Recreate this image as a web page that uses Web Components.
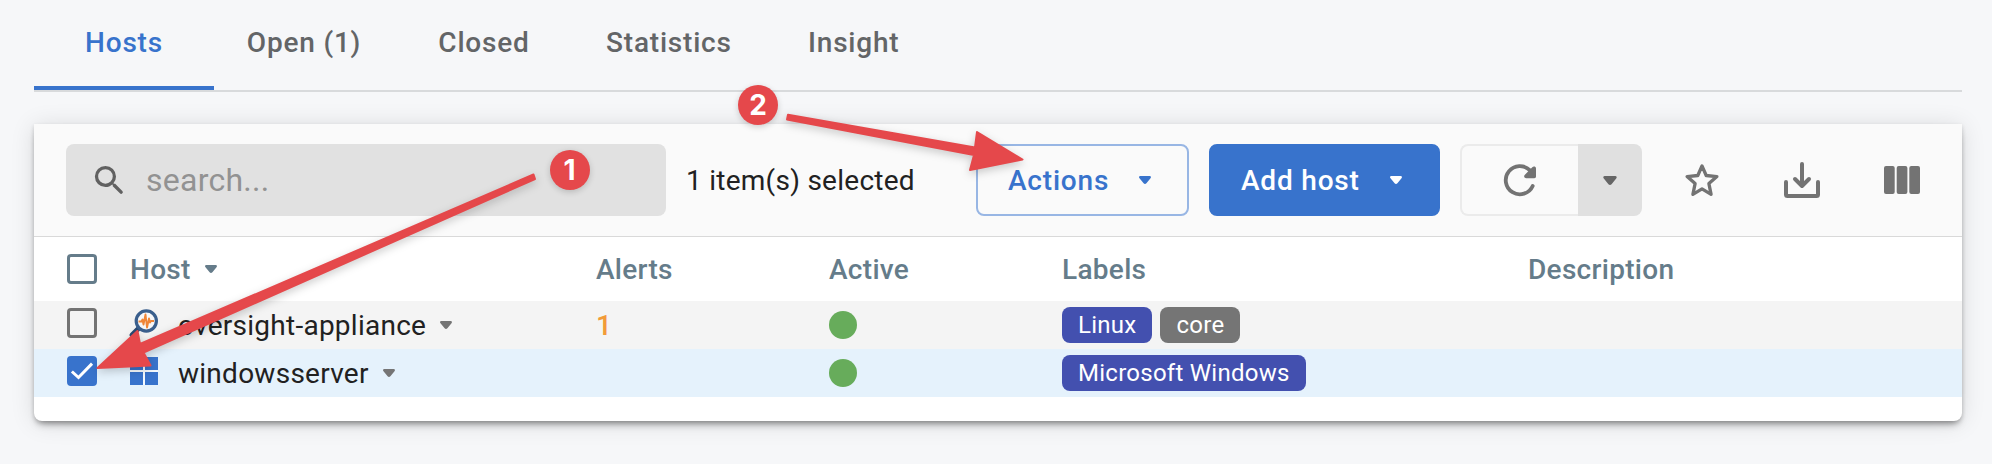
<!DOCTYPE html>
<html lang="en">
<head>
<meta charset="utf-8">
<title>Hosts</title>
<style>
body{margin:0;background:#f6f7f9;font-family:Roboto,"Liberation Sans",sans-serif}
</style>
</head>
<body>
<hosts-page></hosts-page>
<script>
const define=(name,html,init)=>{
  const t=document.createElement('template');
  t.innerHTML=html;
  customElements.define(name,class extends HTMLElement{
    constructor(){
      super();
      this.attachShadow({mode:'open'}).append(t.content.cloneNode(true));
    }
    connectedCallback(){ if(init) init(this,this.shadowRoot); }
  });
};

const icons={
  search:['24 24','<path d="M15.5 14h-.79l-.28-.27A6.47 6.47 0 0 0 16 9.5 6.5 6.5 0 1 0 9.5 16c1.61 0 3.09-.59 4.23-1.57l.27.28v.79l4.4 4.4a1.06 1.06 0 0 0 1.5-1.5zm-6 0a4.5 4.5 0 1 1 0-9 4.5 4.5 0 0 1 0 9z"/>'],
  refresh:['32 32','<path d="M28.700 22A14.100 14.100 0 1 1 26 6.400" fill="none" stroke="currentColor" stroke-width="3.800" stroke-linecap="round"/><path d="M28.3 3.2c1.2-1.1 3.7-.7 3.7 1.3v8c0 1-.7 1.7-1.7 1.7h-8c-2.2 0-2.8-2.2-1.4-3.5z"/>'],
  star:['34 34','<path d="M17 2.9l4.2 9.6 10.7 1.1-8 7 2.2 10.7L17 25.9l-9.1 5.4 2.2-10.7-8-7 10.7-1.1z" fill="none" stroke="currentColor" stroke-width="3.3" stroke-linejoin="round"/>'],
  download:['36 36','<g fill="none" stroke="currentColor" stroke-width="4" stroke-linecap="round" stroke-linejoin="round"><path d="M18 2v21M11 17l7 7 7-7M2 20v12.500Q2 34 3.500 34h29q1.500 0 1.500-1.500V20"/></g>'],
  columns:['36 28','<rect width="10.700" height="28" rx="2"/><rect x="12.700" width="10.700" height="28" rx="2"/><rect x="25.300" width="10.700" height="28" rx="2"/>'],
  caret:['12 8','<path d="M1.300 0h9.400c1.300 0 1.700 1.500.8 2.300L7.400 7.300c-.8.900-2 .9-2.800 0L.5 2.300C-.4 1.500 0 0 1.300 0z"/>'],
  check:['22 16','<path d="M2 9.500l5.500 5L20 1.700" fill="none" stroke="currentColor" stroke-width="3" stroke-linecap="square"/>'],
  windows:['28 28','<path d="M0 0h13v13H0zM15 0h13v13H15zM0 15h13v13H0zM15 15h13v13H15z"/><path d="M13 0h2v28h-2zM0 13h28v2H0z" opacity=".6" fill="#fff"/>'],
  lens:['28 28','<path d="M8.500 19.500L2 26" stroke="#2c4a73" stroke-width="5" stroke-linecap="round"/><circle cx="16.300" cy="12" r="10.100" fill="#f7f7f8" stroke="#3a5f8d" stroke-width="3.200"/><path d="M8.500 12.500h3l1-2 1 5 2-10 1.500 13 2-9 1 4 1-1.500H24" fill="none" stroke="#f08536" stroke-width="1.900" stroke-linejoin="round"/>']
};
define('ui-icon','<style>:host{display:block;flex:none}svg{display:block;width:100%;height:100%;overflow:visible;fill:currentColor}</style><svg></svg>',(h,r)=>{
  const [box,body]=icons[h.getAttribute('name')];
  const s=r.querySelector('svg');
  s.setAttribute('viewBox','0 0 '+box);
  s.innerHTML=body;
  h.style.width=h.getAttribute('w')+'px';
  h.style.height=h.getAttribute('h')+'px';
});

define('ui-tab','<style>:host{display:flex;justify-content:center;min-width:180px;height:90px;padding:0 32px 5px;box-sizing:border-box;align-items:center;font-size:28px;font-weight:500;letter-spacing:.8px;color:#636567;white-space:nowrap;border-bottom:0 solid #3873cc}:host([active]){color:#3873cc;border-bottom-width:4px;padding-bottom:1px}</style><slot></slot>');

define('ui-tabs','<style>:host{display:flex;border-bottom:2px solid #d8dadc}</style><slot></slot>');

define('search-box','<style>:host{display:flex;align-items:center;width:600px;height:72px;box-sizing:border-box;border-radius:8px;background:#e1e1e1;padding-left:24px;color:#616161}span{font-size:32px;letter-spacing:.25px;color:#929292;margin-left:17px}</style><ui-icon name="search" w="39" h="39"></ui-icon><span>search...</span>');

define('menu-button','<style>:host{display:flex;align-items:center;justify-content:space-between;height:72px;box-sizing:border-box;border:2px solid #98b6e4;border-radius:8px;padding:0 36px 0 30px;color:#3873cc;font-size:28px;font-weight:500;letter-spacing:.8px;white-space:nowrap}:host([filled]){background:#3873cc;border-color:#3873cc;color:#fff}</style><slot></slot><ui-icon name="caret" w="12" h="8"></ui-icon>');

define('refresh-group','<style>:host{display:flex;width:182px;height:72px;color:#737373}div{display:flex;align-items:center;justify-content:center;box-sizing:border-box}.a{width:118px;border:2px solid #ebebeb;border-right:0;border-radius:8px 0 0 8px}.b{width:64px;background:#e0e0e0;border-radius:0 8px 8px 0;color:#666}</style><div class="a"><ui-icon name="refresh" w="32" h="32"></ui-icon></div><div class="b"><ui-icon name="caret" w="14" h="9"></ui-icon></div>');

define('ui-checkbox','<style>:host{display:flex;align-items:center;justify-content:center;flex:none;width:30px;height:30px;box-sizing:border-box;border:3px solid currentColor;border-radius:4px;color:#737373}ui-icon{display:none;color:#fff}:host([checked]){background:#3873cc;border-color:#3873cc}:host([checked]) ui-icon{display:block}</style><ui-icon name="check" w="22" h="16"></ui-icon>');

define('ui-chip','<style>:host{display:flex;align-items:center;height:36px;padding:0 16px;border-radius:8px;background:#4350af;color:#fff;font-size:24px;letter-spacing:.26px;box-sizing:border-box;white-space:nowrap}:host([grey]){background:#757575}</style><slot></slot>');

define('status-dot','<style>:host{display:block;width:28px;height:28px;border-radius:50%;background:#67ac5b}</style>');

define('host-row',`<style>
:host{display:grid;grid-template-columns:63px 466px 233px 233px 466px 1fr;align-items:center;height:48px;padding-left:33px;font-size:28px;letter-spacing:.26px;color:#212121;box-sizing:border-box}
:host([odd]){background:#f4f4f4}
:host([selected]){background:#e5f2fc}
:host([head]){height:64px;color:#657c8a;font-weight:500;letter-spacing:.3px}
</style><slot></slot>`);

define('host-name','<style>:host{display:flex;align-items:center;height:48px;white-space:nowrap}.t{margin:0 14px 0 20px}.c{color:#757575}:host([head]) .t{margin-left:0}:host([head]) .c{color:inherit}</style><slot name="icon"></slot><span class="t"><slot></slot></span><ui-icon class="c" name="caret" w="12" h="8"></ui-icon>');

define('step-arrow','<style>:host{position:absolute;left:0;top:0;width:1992px;height:464px;pointer-events:none}svg{display:block;filter:drop-shadow(0 3px 4px rgba(0,0,0,.2))}</style><svg width="1992" height="464" fill="#e5484b" stroke="#e5484b" stroke-linejoin="round" stroke-width="2"><path d="M533.500 174.500L535 179 143.500 352.500 150.500 365.500 97.500 368 137.500 331 140 344z"/><path d="M788 114.800L975 147.500 977 132 1022.500 159.500 970 170 974 155 787 119.500z"/></svg>');

define('step-badge','<style>:host{position:absolute;display:flex;align-items:center;justify-content:center;width:40px;height:40px;border-radius:50%;background:#e5484b;color:#fff;font:700 28px Inter,sans-serif;box-shadow:0 2px 6px rgba(0,0,0,.18)}</style><slot></slot>');

define('hosts-page',`<style>
:host{display:block;position:relative;height:464px;padding:0 30px 0 34px;box-sizing:border-box;overflow:hidden}
.card{margin-top:32px;height:297px;background:#fff;border-radius:0 0 8px 8px;box-shadow:0 6px 8px -4px rgba(0,0,0,.40),0 2px 4px rgba(0,0,0,.16),0 2px 24px rgba(0,0,0,.12)}
.bar{display:flex;align-items:center;height:113px;box-sizing:border-box;padding:0 42px 0 32px;background:#fafafa;border-bottom:1px solid #d9d9d9}
.sel{font-size:28px;letter-spacing:.26px;color:#212121;margin-left:20px;width:290px;white-space:nowrap}
.tools{display:flex;align-items:center;justify-content:space-between;flex:1;margin-left:43px;color:#737373}
.labels{display:flex;gap:8px}
.alert{color:#f29b38;font-weight:500}
</style>
<ui-tabs><ui-tab active>Hosts</ui-tab><ui-tab>Open (1)</ui-tab><ui-tab>Closed</ui-tab><ui-tab>Statistics</ui-tab><ui-tab>Insight</ui-tab></ui-tabs>
<div class="card">
 <div class="bar">
  <search-box></search-box>
  <span class="sel">1 item(s) selected</span>
  <menu-button style="width:213px">Actions</menu-button>
  <menu-button filled style="width:231px;margin:0 20px">Add host</menu-button>
  <refresh-group></refresh-group>
  <div class="tools"><ui-icon name="star" w="34" h="34"></ui-icon><ui-icon name="download" w="36" h="36"></ui-icon><ui-icon name="columns" w="36" h="28"></ui-icon></div>
 </div>
 <host-row head><ui-checkbox style="color:#657c8a"></ui-checkbox><host-name head>Host</host-name><span>Alerts</span><span>Active</span><span>Labels</span><span>Description</span></host-row>
 <host-row odd><ui-checkbox style="margin-top:-4px"></ui-checkbox><host-name><ui-icon slot="icon" name="lens" w="28" h="28" style="margin-top:-4px"></ui-icon>oversight-appliance</host-name><span class="alert">1</span><status-dot></status-dot><div class="labels"><ui-chip>Linux</ui-chip><ui-chip grey>core</ui-chip></div><span></span></host-row>
 <host-row selected><ui-checkbox checked style="margin-top:-4px"></ui-checkbox><host-name><ui-icon slot="icon" name="windows" w="28" h="28" style="color:#3873cc;margin-top:-4px"></ui-icon>windowsserver</host-name><span></span><status-dot></status-dot><div class="labels"><ui-chip>Microsoft Windows</ui-chip></div><span></span></host-row>
</div>
<step-arrow></step-arrow>
<step-badge style="left:549.500px;top:150px">1</step-badge>
<step-badge style="left:738px;top:85px">2</step-badge>`);
</script>
</body>
</html>
